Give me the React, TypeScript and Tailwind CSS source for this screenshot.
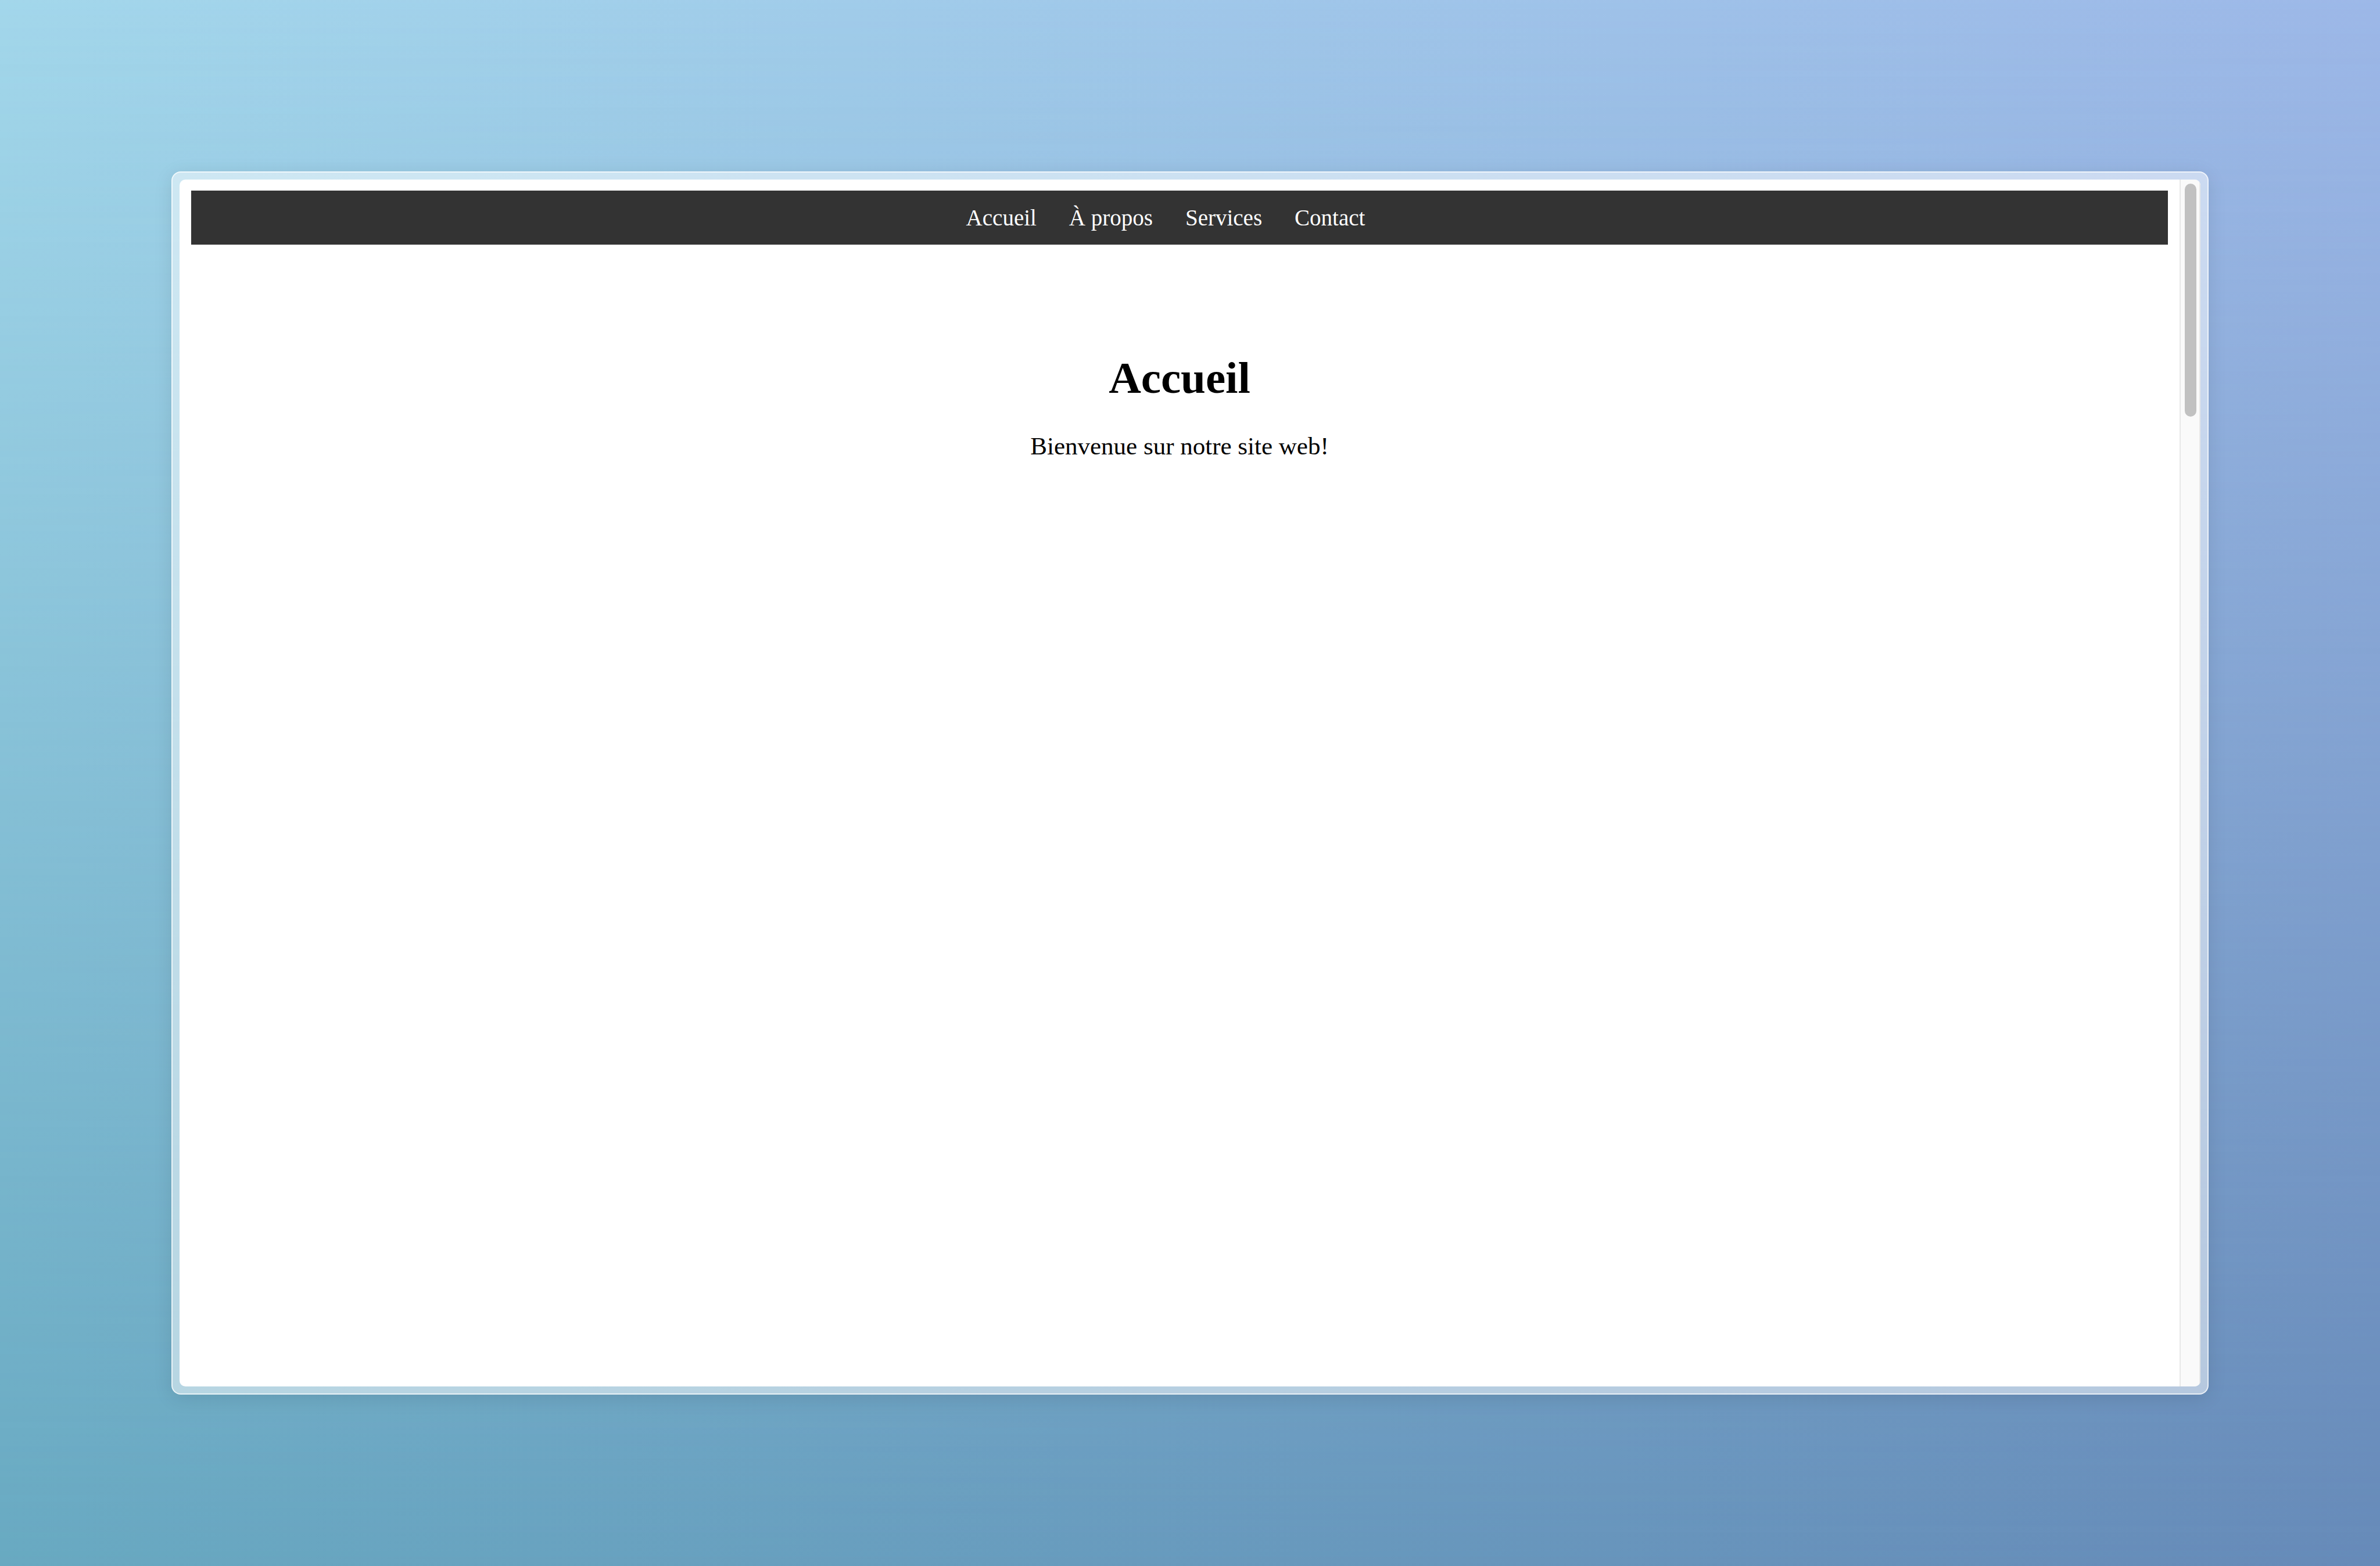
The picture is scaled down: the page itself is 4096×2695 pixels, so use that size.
const links = [
  { label: "Accueil", href: "#accueil" },
  { label: "À propos", href: "#a-propos" },
  { label: "Services", href: "#services" },
  { label: "Contact", href: "#contact" },
];

function Backdrop() {
  return (
    <div className="absolute inset-0 -z-10 bg-linear-to-r from-[#a3d7eb] to-[#9db8e8]">
      <div className="h-full bg-linear-to-r from-[#68a9c1] to-[#668ab8] mask-linear-180 mask-linear-from-transparent mask-linear-to-black" />
    </div>
  );
}

function Scrollbar() {
  return (
    <div
      aria-hidden="true"
      className="w-9 shrink-0 border-x-2 border-[#e8e8e8] bg-[#fafafa] pt-[7px] pr-[5px] pl-[7px]"
    >
      <div className="h-[401px] rounded-full bg-[#c1c1c1]" />
    </div>
  );
}

export default function App() {
  return (
    <div className="relative isolate flex min-h-screen p-[295px] font-['Liberation_Serif',serif] text-black">
      <Backdrop />
      <div className="flex flex-1 rounded-2xl border-2 border-white/70 bg-white/50 p-3 shadow-[0_6px_32px_rgba(0,0,0,0.10)]">
        <div className="flex flex-1 overflow-hidden rounded-[10px] bg-white">
          <div className="flex-1 px-5 py-[19px]">
            <nav className="bg-[#333333] text-center text-[39px] leading-[93px] text-white">
              <ul className="flex justify-center gap-14 pr-12">
                {links.map((link) => (
                  <li key={link.href}>
                    <a href={link.href}>{link.label}</a>
                  </li>
                ))}
              </ul>
            </nav>
            <main id="accueil" className="pt-[185px] text-center">
              <h1 className="text-[77px] leading-[88px] font-bold">Accueil</h1>
              <p className="mt-[50px] text-[43px] leading-[48px]">Bienvenue sur notre site web!</p>
            </main>
          </div>
          <Scrollbar />
        </div>
      </div>
    </div>
  );
}
